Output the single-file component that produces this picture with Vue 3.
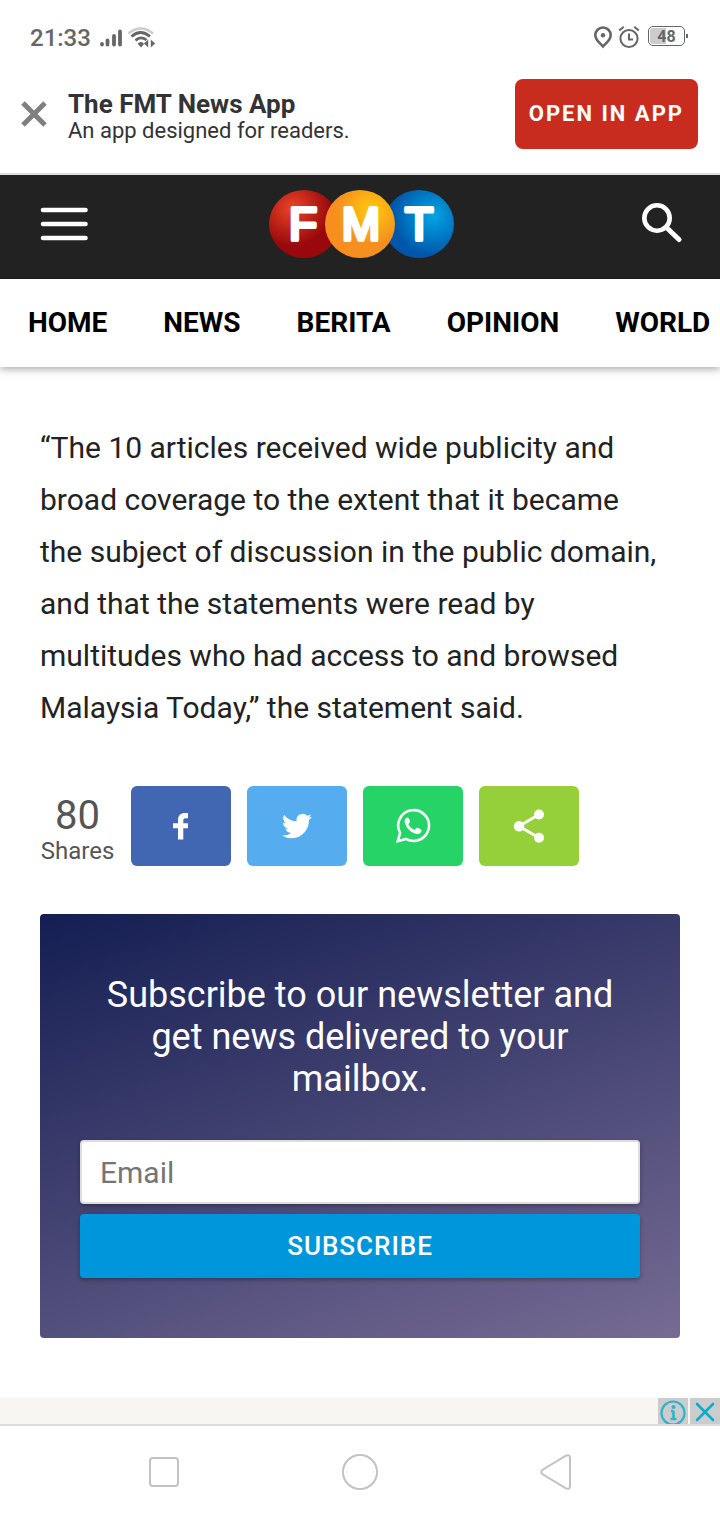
<script setup>
import { ref } from 'vue'

const email = ref('')
const sections = ['HOME', 'NEWS', 'BERITA', 'OPINION', 'WORLD']
</script>

<template>
  <div class="screen">
    <div class="status">
      <div class="status-group">
        <span class="clock">21:33</span>
        <svg class="signal" width="24" height="20" viewBox="0 0 24 20" aria-hidden="true">
          <path d="M3 16v.5M8.500 12.500v4M15 8v8.500M21 3.500v13" stroke="#666" stroke-width="3.800" stroke-linecap="round" />
        </svg>
        <svg class="wifi" width="30" height="24" viewBox="0 0 30 24" fill="none" aria-hidden="true">
          <path d="M1.500 7.500Q13.500-2.500 26 7.500" stroke="#ccc" stroke-width="2.600" />
          <path d="M4.500 10.500Q13.500 2.500 23 10.500M8.500 14.500Q13.500 9.500 19.500 14" stroke="#666" stroke-width="2.800" />
          <path d="M10.500 17.500q3.500-3 7 0l-3.500 4z" fill="#666" />
          <path d="M21.500 13v9l-5-4.500zM23.500 13v9l5-4.500z" fill="#666" stroke="#fff" stroke-width=".6" />
        </svg>
      </div>
      <div class="status-group right">
        <svg width="20" height="24" viewBox="0 0 20 24" fill="none" aria-hidden="true">
          <path d="M10 20.500C7 17 2.300 14 2.300 9.200a7.700 7.700 0 0 1 15.400 0C17.700 14 13 17 10 20.500z" stroke="#666" stroke-width="2.600" />
          <circle cx="10" cy="9.300" r="2.200" fill="#666" />
        </svg>
        <svg width="22" height="24" viewBox="0 0 22 24" fill="none" stroke="#666" stroke-width="2" aria-hidden="true">
          <circle cx="11" cy="12.500" r="8.600" />
          <path d="M11 7.500v6h4M1.200 4.500l4.600-3.700M20.800 4.500l-4.600-3.700" />
        </svg>
        <span class="battery">48</span>
      </div>
    </div>

    <aside class="app-banner">
      <button class="close" type="button" aria-label="Close">
        <svg width="26" height="26" viewBox="0 0 26 26" aria-hidden="true">
          <path d="M2 2l22 22M24 2L2 24" stroke="#808080" stroke-width="5" />
        </svg>
      </button>
      <div class="app-copy">
        <strong>The FMT News App</strong>
        <span>An app designed for readers.</span>
      </div>
      <a class="open-app" href="#">OPEN IN APP</a>
    </aside>

    <header class="masthead">
      <button type="button" class="icon-button" aria-label="Menu">
        <svg width="48" height="34" viewBox="0 0 48 34" aria-hidden="true">
          <path d="M3 3h42.500M3 17h42.500M3 31h42.500" stroke="#fff" stroke-width="4.600" stroke-linecap="round" />
        </svg>
      </button>
      <a href="#" class="logo" aria-label="FMT home">
        <svg width="186" height="68" viewBox="0 0 186 68">
          <defs>
            <radialGradient id="red" cx=".33" cy=".27" r=".55">
              <stop offset="0" stop-color="#ea4526" />
              <stop offset="1" stop-color="#99090c" />
            </radialGradient>
            <radialGradient id="orange" cx=".66" cy=".3" r=".5">
              <stop offset="0" stop-color="#ffcb0a" />
              <stop offset="1" stop-color="#f68e20" />
            </radialGradient>
            <radialGradient id="blue" cx=".7" cy=".38" r=".58">
              <stop offset="0" stop-color="#00a6e4" />
              <stop offset="1" stop-color="#0057aa" />
            </radialGradient>
          </defs>
          <ellipse cx="35" cy="34" rx="35" ry="34" fill="url(#red)" />
          <ellipse cx="150" cy="34" rx="35" ry="34" fill="url(#blue)" />
          <ellipse cx="91" cy="34" rx="35" ry="34" fill="url(#orange)" />
          <g class="logo-letters">
            <text x="34" y="50">F</text>
            <text x="92" y="50">M</text>
            <text x="150" y="50">T</text>
          </g>
        </svg>
      </a>
      <button type="button" class="icon-button" aria-label="Search">
        <svg width="42" height="42" viewBox="0 0 42 42" fill="none" stroke="#fff" aria-hidden="true">
          <circle cx="17" cy="15" r="12.700" stroke-width="4.600" />
          <path d="M27 25l12 11.500" stroke-width="5" stroke-linecap="round" />
        </svg>
      </button>
    </header>

    <nav class="sections" aria-label="Sections">
      <a v-for="name in sections" :key="name" href="#">{{ name }}</a>
    </nav>

    <main class="article">
      <p class="body-text">“The 10 articles received wide publicity and broad coverage to the extent that it became the subject of discussion in the public domain, and that the statements were read by multitudes who had access to and browsed Malaysia Today,” the statement said.</p>

      <div class="share">
        <div class="count"><b>80</b><span>Shares</span></div>
        <button type="button" class="facebook" aria-label="Share on Facebook">
          <svg width="32" height="32" viewBox="0 0 32 32" fill="#fff" aria-hidden="true">
            <path d="M13 29.500V18.300H8v-5h5V10c0-4.500 2.800-7 7-7h3v5.200h-2.300c-2 0-2.400 1-2.400 2.400v2.700H23v5h-4.700v11.200z" />
          </svg>
        </button>
        <button type="button" class="twitter" aria-label="Share on Twitter">
          <svg width="30" height="30" viewBox="0 0 24 24" fill="#fff" aria-hidden="true">
            <path d="M23.950 4.570a10 10 0 0 1-2.820.770 4.960 4.960 0 0 0 2.160-2.720c-.950.550-2 .950-3.130 1.180a4.920 4.920 0 0 0-8.380 4.480C7.690 8.100 4.070 6.130 1.640 3.160a4.920 4.920 0 0 0 1.520 6.570 4.900 4.900 0 0 1-2.230-.610v.060a4.920 4.920 0 0 0 3.950 4.830 5 5 0 0 1-2.210.080 4.940 4.940 0 0 0 4.600 3.420A9.870 9.870 0 0 1 0 19.540a14 14 0 0 0 7.550 2.210c9.050 0 14-7.500 14-13.980 0-.210 0-.420-.020-.630a10 10 0 0 0 2.420-2.570z" />
          </svg>
        </button>
        <button type="button" class="whatsapp" aria-label="Share on WhatsApp">
          <svg width="36" height="36" viewBox="0 0 36 36" fill="none" aria-hidden="true">
            <path d="M2.800 33.200l2.300-8.300a15.400 15.400 0 1 1 5.900 6z" stroke="#fff" stroke-width="2.600" />
            <path d="M12.400 9.500c-1.700.100-3.200 2.300-2.700 4.800 1.200 5.700 6.400 10.700 11.700 11.600 2.800.5 5.300-1.100 5.200-3.600 0-.700-3.900-2.700-4.700-2.500-.700.100-1.600 2-2.400 2-2.200-.300-5.600-3.800-6-5.500-.1-.8 1.600-1.600 1.600-2.500 0-.8-1.200-4.300-2.700-4.300z" fill="#fff" />
          </svg>
        </button>
        <button type="button" class="more" aria-label="More sharing options">
          <svg width="34" height="36" viewBox="0 0 34 36" aria-hidden="true">
            <path d="M27 6.500L7 18.200l20 11.500" fill="none" stroke="#fff" stroke-width="3" />
            <g fill="#fff">
              <circle cx="27" cy="6.500" r="5" />
              <circle cx="7" cy="18.200" r="5.200" />
              <circle cx="27" cy="29.700" r="5" />
            </g>
          </svg>
        </button>
      </div>

      <form class="newsletter" @submit.prevent>
        <h2>Subscribe to our newsletter and get news delivered to your mailbox.</h2>
        <input v-model="email" type="email" placeholder="Email" aria-label="Email" />
        <button type="submit">SUBSCRIBE</button>
      </form>
    </main>

    <div class="ad">
      <button type="button" aria-label="Ad information">
        <svg width="26" height="26" viewBox="0 0 26 26" fill="none" stroke="#2fb4cb" aria-hidden="true">
          <circle cx="13" cy="15" r="11.500" stroke-width="2.200" />
          <path d="M13.500 13v8M11 13h2.500M10.500 21h6" stroke-width="2.600" />
          <circle cx="13.500" cy="9" r="1" stroke-width="2" />
        </svg>
      </button>
      <button type="button" aria-label="Close ad">
        <svg width="20" height="24" viewBox="0 0 20 24" aria-hidden="true">
          <path d="M2 5l16 16M18 5L2 21" stroke="#06adcd" stroke-width="2.600" stroke-linecap="round" />
        </svg>
      </button>
    </div>

    <div class="system-nav">
      <button type="button" aria-label="Recent apps">
        <svg width="38" height="38" viewBox="0 0 38 38"><rect x="5" y="5" width="28" height="28" rx="3" /></svg>
      </button>
      <button type="button" aria-label="Home">
        <svg width="38" height="38" viewBox="0 0 38 38"><circle cx="19" cy="19" r="17" /></svg>
      </button>
      <button type="button" aria-label="Back">
        <svg width="38" height="38" viewBox="0 0 38 38"><path d="M6 16.500L28.500 2.800q4.500-2 4.500 2.200v28q0 4.200-4.500 2.200L6 21.500q-3.500-2.500 0-5z" /></svg>
      </button>
    </div>
  </div>
</template>

<style>
body {
  margin: 0;
  background: #fff;
}
</style>

<style scoped>
.screen {
  display: flex;
  flex-direction: column;
  min-height: 100vh;
  overflow: hidden;
  font-family: Roboto, "Liberation Sans", sans-serif;
  color: #222;
  background: #fff;
}
.screen * {
  box-sizing: border-box;
}
svg {
  display: block;
  flex: none;
}
button {
  display: flex;
  align-items: center;
  justify-content: center;
  margin: 0;
  padding: 0;
  border: 0;
  background: none;
  font-family: inherit;
}
a {
  color: inherit;
  text-decoration: none;
}
.status {
  display: flex;
  justify-content: space-between;
  align-items: center;
  height: 75px;
  padding: 0 32px 0 30px;
  color: #666;
}
.status-group {
  display: flex;
  align-items: center;
}
.clock {
  font-size: 24px;
  font-weight: 500;
  line-height: 32px;
}
.signal {
  margin-left: 8px;
}
.wifi {
  margin-left: 4px;
}
.right {
  gap: 5px;
}
.battery {
  position: relative;
  width: 37px;
  height: 20px;
  margin: 0 3px 3px;
  padding: 1px;
  border: 1px solid #666;
  border-radius: 5px;
  background: linear-gradient(90deg, #ccc 48%, #fff 48%) content-box;
  font-size: 16px;
  font-weight: 700;
  line-height: 17px;
  text-align: center;
}
.battery::after {
  content: "";
  position: absolute;
  top: 7px;
  right: -4px;
  width: 2px;
  height: 4px;
  background: #666;
}
.app-banner {
  display: flex;
  align-items: center;
  height: 100px;
  padding: 0 22px 20px 21px;
  border-bottom: 2px solid #ddd;
}
.close {
  margin-right: 21px;
}
.app-copy {
  display: flex;
  flex: 1;
  flex-direction: column;
  padding-top: 6px;
  font-size: 22px;
  line-height: 26px;
  color: #333;
}
.app-copy strong {
  font-size: 26px;
  line-height: 28px;
}
.open-app {
  padding: 0 14px;
  border-radius: 8px;
  background: #c82c1e;
  color: #fff;
  font-size: 22px;
  font-weight: 700;
  letter-spacing: 2px;
  line-height: 70px;
}
.masthead {
  display: flex;
  align-items: center;
  justify-content: space-between;
  height: 104px;
  padding: 0 38px 6px 40px;
  background: #222;
}
.logo {
  margin-right: 4px;
}
.logo-letters {
  font-family: "Liberation Sans", sans-serif;
  font-size: 46px;
  text-anchor: middle;
  fill: #fff;
  stroke: #fff;
  stroke-width: 4;
  stroke-linejoin: round;
}
.sections {
  display: flex;
  flex: none;
  gap: 56px;
  height: 88px;
  padding-left: 28px;
  box-shadow: 0 2px 8px rgba(0, 0, 0, 0.35);
  color: #000;
  font-size: 28px;
  font-weight: 700;
  line-height: 88px;
  white-space: nowrap;
}
.article {
  padding: 55px 40px 60px;
}
.body-text {
  margin: 0 0 52px;
  padding-right: 16px;
  font-size: 30px;
  line-height: 52px;
}
.share {
  display: flex;
  gap: 16px;
  margin-bottom: 48px;
}
.share button {
  width: 100px;
  height: 80px;
  border-radius: 6px;
}
.count {
  display: flex;
  flex-direction: column;
  align-items: center;
  justify-content: center;
  min-width: 75px;
  padding-top: 7px;
  color: #555;
}
.count b {
  font-size: 40px;
  font-weight: 400;
  line-height: 42px;
}
.count span {
  font-size: 24px;
  line-height: 28px;
}
.facebook {
  background: #4267b2;
}
.twitter {
  background: #55acee;
}
.whatsapp {
  background: #25d366;
}
.more {
  background: #95d03a;
}
.newsletter {
  padding: 60px 40px;
  border-radius: 4px;
  background: linear-gradient(160deg, #141e52 0%, #766b94 100%);
}
.newsletter h2 {
  margin: 0 0 40px;
  color: #fff;
  font-size: 36px;
  font-weight: 400;
  line-height: 42px;
  text-align: center;
}
.newsletter input,
.newsletter button {
  width: 100%;
  height: 64px;
  border-radius: 4px;
  box-shadow: 0 2px 4px rgba(0, 0, 0, 0.3);
}
.newsletter input {
  display: block;
  margin-bottom: 10px;
  padding: 0 18px;
  border: 2px solid #ddd;
  background: #fff;
  color: #222;
  font-family: inherit;
  font-size: 30px;
}
.newsletter input::placeholder {
  color: #757575;
}
.newsletter button {
  background: #0096dc;
  color: #fff;
  font-size: 26px;
  font-weight: 500;
  letter-spacing: 1px;
}
.ad {
  display: flex;
  justify-content: flex-end;
  gap: 2px;
  height: 26px;
  background: #f7f6f3;
}
.ad button {
  width: 30px;
  height: 26px;
  overflow: hidden;
  background: #ccc;
}
.system-nav {
  display: flex;
  flex: 1;
  align-items: center;
  justify-content: space-around;
  min-height: 96px;
  padding: 0 66px 2px;
  border-top: 2px solid #ddd;
}
.system-nav svg {
  fill: none;
  stroke: #c2c2c2;
  stroke-width: 2;
}
</style>
